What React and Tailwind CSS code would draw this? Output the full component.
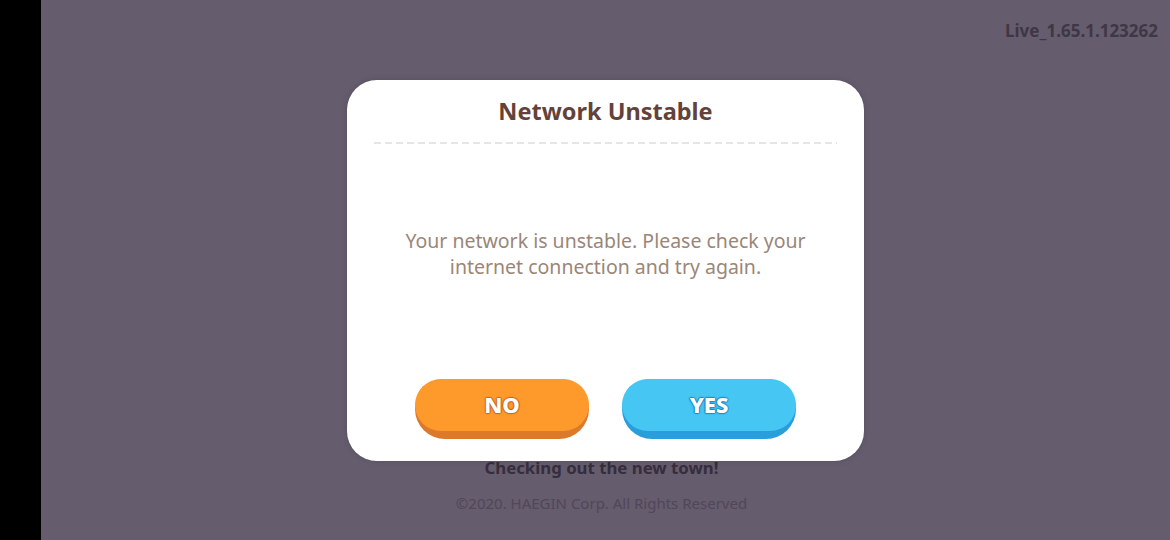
import React from 'react';

const GameButton = ({ label, face, edge, outline }) => (
  <button
    type="button"
    className={`h-[60px] w-[174px] rounded-full ${edge} pb-[8px]`}
  >
    <span
      className={`flex h-full w-full items-center justify-center rounded-full ${face} text-[22px] font-extrabold text-white`}
      style={{
        textShadow: `0 0 2px ${outline}, 0 1px 1px ${outline}, 1px 0 1px ${outline}, -1px 0 1px ${outline}, 0 -1px 1px ${outline}`,
      }}
    >
      {label}
    </span>
  </button>
);

const App = () => {
  return (
    <div
      className="flex h-[540px] w-[1170px] overflow-hidden bg-black"
      style={{ fontFamily: '"Noto Sans", "Open Sans", sans-serif' }}
    >
      <div className="w-[41px] shrink-0 bg-black" />
      <div className="relative flex flex-1 flex-col bg-[#655c6d]">
        <div className="flex justify-end pr-[12px] pt-[18px]">
          <span className="text-[17px] font-bold text-[#3f3746]">
            Live_1.65.1.123262
          </span>
        </div>
        <div className="mt-auto flex flex-col items-center pb-[26px] pr-[8px]">
          <p className="text-[16.8px] font-bold text-[#362d3d]">
            Checking out the new town!
          </p>
          <p className="mt-[11px] text-[15px] text-[#51475a]">
            ©2020. HAEGIN Corp. All Rights Reserved
          </p>
        </div>

        {/* popup */}
        <div className="absolute inset-0 flex items-center justify-center">
          <div className="flex h-[381px] w-[517px] flex-col rounded-[30px] bg-white px-[27px] pb-[22px] pt-[14px] shadow-[0_0_6px_rgba(0,0,0,0.15)]">
            <h2 className="text-center text-[23.5px] font-bold leading-[34px] text-[#63423a]">
              Network Unstable
            </h2>
            <svg className="mt-[14px] block" width="463" height="2">
              <line
                x1="0"
                y1="1"
                x2="463"
                y2="1"
                stroke="#dedcdc"
                strokeWidth="1.5"
                strokeDasharray="7 4"
              />
            </svg>
            <div className="flex flex-1 items-center justify-center pb-[14px]">
              <p className="text-center text-[19.5px] leading-[26px] text-[#9a8678]">
                Your network is unstable. Please check your
                <br />
                internet connection and try again.
              </p>
            </div>
            <div className="flex justify-center gap-[33px]">
              <GameButton
                label="NO"
                face="bg-[#fe9a2c]"
                edge="bg-[#dc7a2c]"
                outline="#c96a24"
              />
              <GameButton
                label="YES"
                face="bg-[#45c6f3]"
                edge="bg-[#2a9edb]"
                outline="#1e8ccc"
              />
            </div>
          </div>
        </div>
      </div>
    </div>
  );
};

export default App;
